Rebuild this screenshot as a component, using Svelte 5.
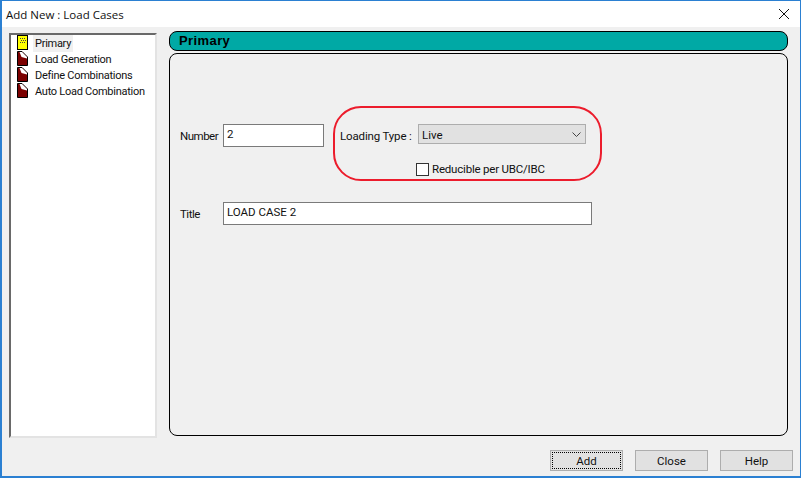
<script>
  const nodes = [
    { label: 'Primary', active: true },
    { label: 'Load Generation' },
    { label: 'Define Combinations' },
    { label: 'Auto Load Combination' }
  ];
</script>

<div class="win">
  <header class="titlebar">
    <span class="title">Add New : Load Cases</span>
    <svg class="close" width="12" height="12" viewBox="0 0 12 12"><path d="M1 1 L11 11 M11 1 L1 11" stroke="#111" stroke-width="1" fill="none"/></svg>
  </header>
  <div class="body">
    <div class="main">
      <ul class="tree">
        {#each nodes as n}
          <li class="node">
            {#if n.active}
              <svg width="11" height="16" viewBox="0 0 11 16" shape-rendering="crispEdges">
                <rect x="0.5" y="0.5" width="10" height="14" fill="#ffff00" stroke="#000"/>
                <path d="M3 3h1v1H3zM5 3h1v1H5zM7 3h1v1H7zM4 5h1v1H4zM6 5h1v1H6zM8 5h1v1H8zM3 7h1v1H3zM5 7h1v1H5zM7 7h1v1H7z" fill="#444"/>
              </svg>
            {:else}
              <svg width="11" height="16" viewBox="0 0 11 16">
                <path d="M0.5 0.5 H5 L10.5 6 V14.5 H0.5 Z" fill="#7b0000" stroke="#000"/>
                <path d="M2.5 1 H5 L10 6 V7.5 L4.5 6 Z" fill="#fff"/>
              </svg>
            {/if}
            <span class="lbl" class:active={n.active}>{n.label}</span>
          </li>
        {/each}
      </ul>
      <section class="content">
        <h2 class="band">Primary</h2>
        <div class="panel">
          <div class="row1">
            <span class="lab">Number</span>
            <div class="input num">2</div>
            <div class="ring">
              <div class="ringrow">
                <span class="lt">Loading Type :</span>
                <div class="select">
                  <span class="val">Live</span>
                  <svg width="9" height="5" viewBox="0 0 9 5"><path d="M0.5 0.5 L4.5 4.5 L8.5 0.5" stroke="#444" fill="none"/></svg>
                </div>
              </div>
              <label class="check"><span class="box"></span><span>Reducible per UBC/IBC</span></label>
            </div>
          </div>
          <div class="row2">
            <span class="lab">Title</span>
            <div class="input ttl">LOAD CASE 2</div>
          </div>
        </div>
      </section>
    </div>
    <footer class="btns">
      <button class="focus"><span>Add</span></button>
      <button><span>Close</span></button>
      <button><span>Help</span></button>
    </footer>
  </div>
</div>

<style>
  :global(body) { margin: 0; background: #f0f0f0; }
  .win {
    width: 801px; height: 478px; box-sizing: border-box;
    border: 2px solid #2b80d2; border-top-width: 1px; border-right-width: 1px;
    display: flex; flex-direction: column;
    font-family: Roboto, "Liberation Sans", sans-serif; font-size: 11.5px; color: #111;
  }
  .titlebar {
    height: 26px; flex: none; background: #fff; display: flex; align-items: center;
    justify-content: space-between; padding: 0 10px 0 4px;
  }
  .title { font-family: "Open Sans", sans-serif; font-size: 11.5px; }
  .body { flex: 1; background: #f0f0f0; display: flex; flex-direction: column; padding: 4px 7px 5px 7px; min-height: 0; }
  .main { flex: 1; display: flex; min-height: 0; gap: 12px; margin-right: 5px; }
  .tree {
    width: 148px; height: 405px; margin: 2px 0 0; padding: 0 0 0 6px; list-style: none; box-sizing: border-box;
    background: #fff; border: 2px solid #e3e3e3; border-top-color: #696969; border-left-color: #696969;
  }
  .node { height: 16px; display: flex; align-items: center; gap: 5px; white-space: nowrap; }
  .node svg { flex: none; }
  .lbl { padding: 1px 2px 0; line-height: 16px; font-size: 11px; letter-spacing: -0.27px; }
  .lbl.active { background: #f0f0f0; }
  .content { flex: 1; display: flex; flex-direction: column; gap: 2px; height: 405px; }
  .band {
    margin: 0; height: 20px; box-sizing: border-box; background: #00a9a5; border: 1px solid #000; border-radius: 8px;
    font-family: "Liberation Sans", sans-serif; font-size: 13px; font-weight: bold; padding-left: 9px; line-height: 18px; color: #000; letter-spacing: 0.4px;
  }
  .panel {
    height: 383px; box-sizing: border-box; border: 1px solid #000; border-radius: 8px;
    padding: 52px 0 0 10px;
  }
  .row1 { display: flex; align-items: flex-start; height: 75px; }
  .lab { width: 43px; flex: none; letter-spacing: -0.5px; }
  .row1 > .lab { margin-top: 23px; }
  .input {
    box-sizing: border-box; background: #fff; border: 1px solid #7a7a7a; height: 23px; padding: 2px 3px; line-height: 14px;
  }
  .num { width: 101px; margin-top: 18px; }
  .ring {
    margin-left: 9px; width: 269px; height: 75px; box-sizing: border-box;
    border: 2px solid #ec1c2c; border-radius: 28px; padding: 16px 0 0 5px;
  }
  .ringrow { display: flex; align-items: center; gap: 7px; height: 20px; }
  .lt { width: 71px; flex: none; white-space: nowrap; letter-spacing: -0.15px; padding-top: 3px; }
  .select {
    width: 168px; height: 20px; box-sizing: border-box; background: #e1e1e1; border: 1px solid #adadad;
    display: flex; align-items: center; justify-content: space-between; padding: 0 4px 0 3px;
  }
  .val { padding-top: 1px; }
  .check { display: flex; align-items: center; gap: 3px; margin: 18px 0 0 76px; letter-spacing: -0.2px; }
  .box { width: 13px; height: 13px; box-sizing: border-box; border: 1px solid #333; background: #fff; }
  .row2 { display: flex; align-items: center; margin-top: 21px; }
  .ttl { width: 369px; }
  .btns { display: flex; justify-content: flex-end; gap: 12px; height: 21px; flex: none; }
  button {
    width: 73px; height: 21px; padding: 1px; box-sizing: border-box; background: #e1e1e1; border: 1px solid #adadad;
    font: inherit; color: #111; display: flex;
  }
  button span { flex: 1; line-height: 17px; border: 1px solid transparent; text-align: center; }
  button.focus span { border: 1px dotted #000; }
</style>
